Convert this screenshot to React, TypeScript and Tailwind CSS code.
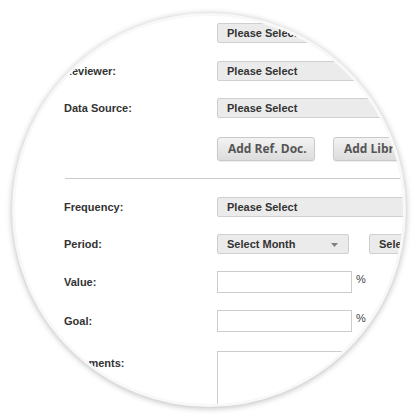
const labelCls = 'w-[153px] shrink-0 text-[11px] font-bold text-[#333]'

function Select({ text, width, arrow }: { text: string; width: string; arrow?: boolean }) {
    return (
        <div
            className={`flex h-[20px] ${width} shrink-0 items-center justify-between rounded-[2px] border border-[#cfcfcf] bg-[#ebebeb] pl-[9px] pr-[10px] text-[11px] font-bold text-[#333]`}
        >
            <span className="whitespace-nowrap">{text}</span>
            {arrow && (
                <svg width="7" height="4" viewBox="0 0 7 4" className="mt-[1px]">
                    <path d="M0 0h7L3.5 4z" fill="#808080" />
                </svg>
            )}
        </div>
    )
}

function Row({ label, className, children }: { label?: string; className: string; children: React.ReactNode }) {
    return (
        <div className={`flex items-center pl-[49px] ${className}`}>
            <div className={labelCls}>{label}</div>
            {children}
        </div>
    )
}

function Button({ children, width }: { children: React.ReactNode; width: string }) {
    return (
        <div
            className={`flex h-[24px] ${width} shrink-0 items-center rounded-[3px] border border-[#c9c9c9] bg-gradient-to-b from-[#f3f3f3] to-[#dcdcdc] pl-[10px] text-[12px] font-bold whitespace-nowrap text-[#555] shadow-[0_1px_1px_rgba(0,0,0,0.08)]`}
            style={{ fontFamily: '"Open Sans", sans-serif' }}
        >
            {children}
        </div>
    )
}

export default function App() {
    return (
        <div className="h-[420px] w-[420px] bg-white pl-[12px] pt-[13px]" style={{ fontFamily: '"Liberation Sans", Arial, sans-serif' }}>
            <div className="h-[394px] w-[394px] overflow-hidden rounded-full border-[3px] border-[#f8f8f8] bg-white shadow-[0_1px_6px_rgba(0,0,0,0.28)]">
                <div className="flex w-[520px] flex-col pt-[7px]">
                    <Row className="">
                        <Select text="Please Select" width="w-[260px]" />
                    </Row>
                    <Row label="Reviewer:" className="mt-[18px]">
                        <Select text="Please Select" width="w-[260px]" />
                    </Row>
                    <Row label="Data Source:" className="mt-[17px]">
                        <Select text="Please Select" width="w-[260px]" />
                    </Row>
                    <Row className="mt-[19px]">
                        <div className="flex gap-[18px]">
                            <Button width="w-[98px]">Add Ref. Doc.</Button>
                            <Button width="w-[98px]">Add Library</Button>
                        </div>
                    </Row>
                    <div className="mt-[17px] ml-[50px] h-px w-[400px] bg-[#cccccc]" />
                    <Row label="Frequency:" className="mt-[18px]">
                        <Select text="Please Select" width="w-[260px]" />
                    </Row>
                    <Row label="Period:" className="mt-[17px]">
                        <div className="flex gap-[20px]">
                            <Select text="Select Month" width="w-[132px]" arrow />
                            <Select text="Select Year" width="w-[132px]" arrow />
                        </div>
                    </Row>
                    <Row label="Value:" className="mt-[17px]">
                        <div className="h-[22px] w-[135px] shrink-0 border border-[#cccccc] bg-white" />
                        <span className="ml-[4px] -mt-[6px] text-[11px] text-[#444]">%</span>
                    </Row>
                    <Row label="Goal:" className="mt-[17px]">
                        <div className="h-[22px] w-[135px] shrink-0 border border-[#cccccc] bg-white" />
                        <span className="ml-[4px] -mt-[6px] text-[11px] text-[#444]">%</span>
                    </Row>
                    <div className="mt-[19px] flex items-start pl-[49px]">
                        <div className={`${labelCls} mt-[4px]`}>Comments:</div>
                        <div className="h-[90px] w-[260px] shrink-0 border border-[#cccccc] bg-white" />
                    </div>
                </div>
            </div>
        </div>
    )
}
